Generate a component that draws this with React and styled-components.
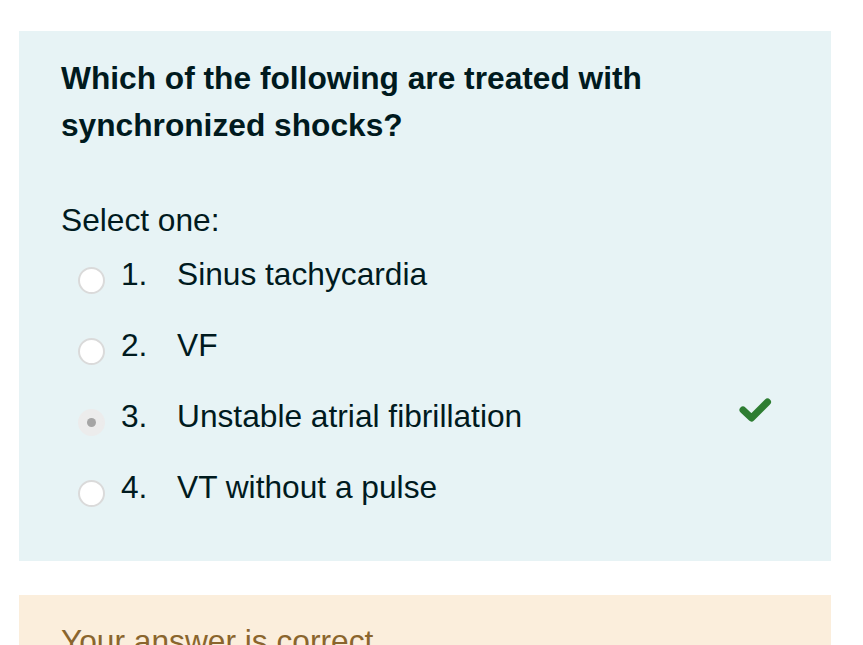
import React from 'react';
import styled, {createGlobalStyle} from 'styled-components';

const GlobalStyle = createGlobalStyle`
  html, body {
    margin: 0;
    padding: 0;
    background: #ffffff;
  }
  body {
    font-family: "Liberation Sans", Arial, Helvetica, sans-serif;
    overflow: hidden;
  }
`;

const Page = styled.div`
  display: flex;
  flex-direction: column;
  gap: 34px;
  padding: 31px 32px 0 19px;
  width: 812px;
`;

const Formulation = styled.div`
  background: #e7f3f5;
  color: #001a1e;
  padding: 24px 42px 39px;
`;

const QuestionText = styled.div`
  font-size: 31.7px;
  font-weight: 700;
  line-height: 47px;
`;

const Prompt = styled.div`
  margin-top: 48px;
  font-size: 31.7px;
  line-height: 46px;
`;

const Answer = styled.div`
  display: flex;
  flex-direction: column;
  margin-top: -5px;
`;

const Row = styled.div`
  display: flex;
  align-items: center;
  height: 71px;
  font-size: 31.7px;
  line-height: 46px;
`;

const Radio = styled.span`
  box-sizing: border-box;
  flex: none;
  width: 27px;
  height: 27px;
  margin: 13px 16px 0 17px;
  border-radius: 50%;
  display: flex;
  align-items: center;
  justify-content: center;
  background: ${({checked}) => (checked ? '#ececec' : '#ffffff')};
  border: 2.5px solid ${({checked}) => (checked ? '#ececec' : '#dadada')};

  &::after {
    content: '';
    display: ${({checked}) => (checked ? 'block' : 'none')};
    width: 9px;
    height: 9px;
    border-radius: 50%;
    background: #a5a5a5;
  }
`;

const Num = styled.span`
  flex: none;
  width: 56px;
`;

const Label = styled.span`
  flex: 1;
`;

const Check = styled.svg`
  flex: none;
  width: 34px;
  height: 26px;
  margin: 0 17px 12px 0;
`;

const Outcome = styled.div`
  background: #fbeedc;
  color: #8a652d;
  padding: 23px 42px;
  height: 200px;
  font-size: 31.7px;
  line-height: 46px;
`;

const options = [
  {n: '1.', text: 'Sinus tachycardia'},
  {n: '2.', text: 'VF'},
  {n: '3.', text: 'Unstable atrial fibrillation', checked: true, correct: true},
  {n: '4.', text: 'VT without a pulse'},
];

export default function App() {
  return (
    <>
      <GlobalStyle/>
      <Page>
        <Formulation>
          <QuestionText>
            Which of the following are treated with<br/>synchronized shocks?
          </QuestionText>
          <Prompt>Select one:</Prompt>
          <Answer>
            {options.map(o => (
              <Row key={o.n}>
                <Radio checked={o.checked}/>
                <Num>{o.n}</Num>
                <Label>{o.text}</Label>
                {o.correct && (
                  <Check viewBox="0 0 34 26">
                    <path d="M5 13 L13.5 21 L29.5 5" fill="none" stroke="#2e7d32"
                          strokeWidth="7" strokeLinecap="round" strokeLinejoin="round"/>
                  </Check>
                )}
              </Row>
            ))}
          </Answer>
        </Formulation>
        <Outcome>Your answer is correct.</Outcome>
      </Page>
    </>
  );
}
